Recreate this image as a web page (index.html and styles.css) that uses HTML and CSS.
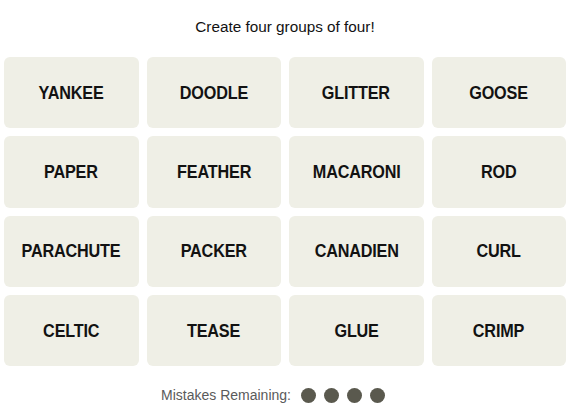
FILE: index.html
```html
<!DOCTYPE html>
<html>
<head>
<meta charset="utf-8">
<link rel="stylesheet" href="styles.css">
</head>
<body>
<main class="game">
  <p class="prompt">Create four groups of four!</p>
  <div class="board">
    <div class="tile"><span class="word">YANKEE</span></div>
    <div class="tile"><span class="word">DOODLE</span></div>
    <div class="tile"><span class="word">GLITTER</span></div>
    <div class="tile"><span class="word">GOOSE</span></div>
    <div class="tile"><span class="word">PAPER</span></div>
    <div class="tile"><span class="word">FEATHER</span></div>
    <div class="tile"><span class="word">MACARONI</span></div>
    <div class="tile"><span class="word">ROD</span></div>
    <div class="tile"><span class="word">PARACHUTE</span></div>
    <div class="tile"><span class="word">PACKER</span></div>
    <div class="tile"><span class="word">CANADIEN</span></div>
    <div class="tile"><span class="word">CURL</span></div>
    <div class="tile"><span class="word">CELTIC</span></div>
    <div class="tile"><span class="word">TEASE</span></div>
    <div class="tile"><span class="word">GLUE</span></div>
    <div class="tile"><span class="word">CRIMP</span></div>
  </div>
  <div class="mistakes">
    <span class="mistakes-label">Mistakes Remaining:</span>
    <span class="dots">
      <span class="dot"></span><span class="dot"></span><span class="dot"></span><span class="dot"></span>
    </span>
  </div>
</main>
</body>
</html>
```

FILE: styles.css
```css
html, body {
  margin: 0;
  padding: 0;
  background: #ffffff;
}
.game {
  width: 570px;
  height: 406px;
  box-sizing: border-box;
  padding: 0 4px;
  font-family: "Liberation Sans", Arial, sans-serif;
  display: flex;
  flex-direction: column;
  align-items: center;
}
.prompt {
  margin: 0;
  padding-top: 18px;
  height: 40px;
  box-sizing: border-box;
  font-size: 15.3px;
  line-height: 18px;
  color: #121212;
  text-align: center;
}
.board {
  margin-top: 17px;
  width: 562px;
  display: grid;
  grid-template-columns: repeat(4, 1fr);
  grid-auto-rows: 71.33px;
  gap: 8px;
}
.tile {
  background: #efefe6;
  border-radius: 6px;
  display: flex;
  align-items: center;
  justify-content: center;
  font-weight: 700;
  font-size: 18px;
  color: #121212;
}
.word {
  display: inline-block;
  transform: scaleX(0.9);
  letter-spacing: -0.2px;
  padding-top: 1px;
}
.mistakes {
  margin-top: 21px;
  display: flex;
  align-items: center;
  gap: 10px;
  padding-right: 24px;
}
.mistakes-label {
  font-size: 14px;
  color: #5a5a5a;
}
.dots {
  display: flex;
  gap: 8px;
}
.dot {
  width: 15px;
  height: 15px;
  border-radius: 50%;
  background: #5a594e;
}
```
